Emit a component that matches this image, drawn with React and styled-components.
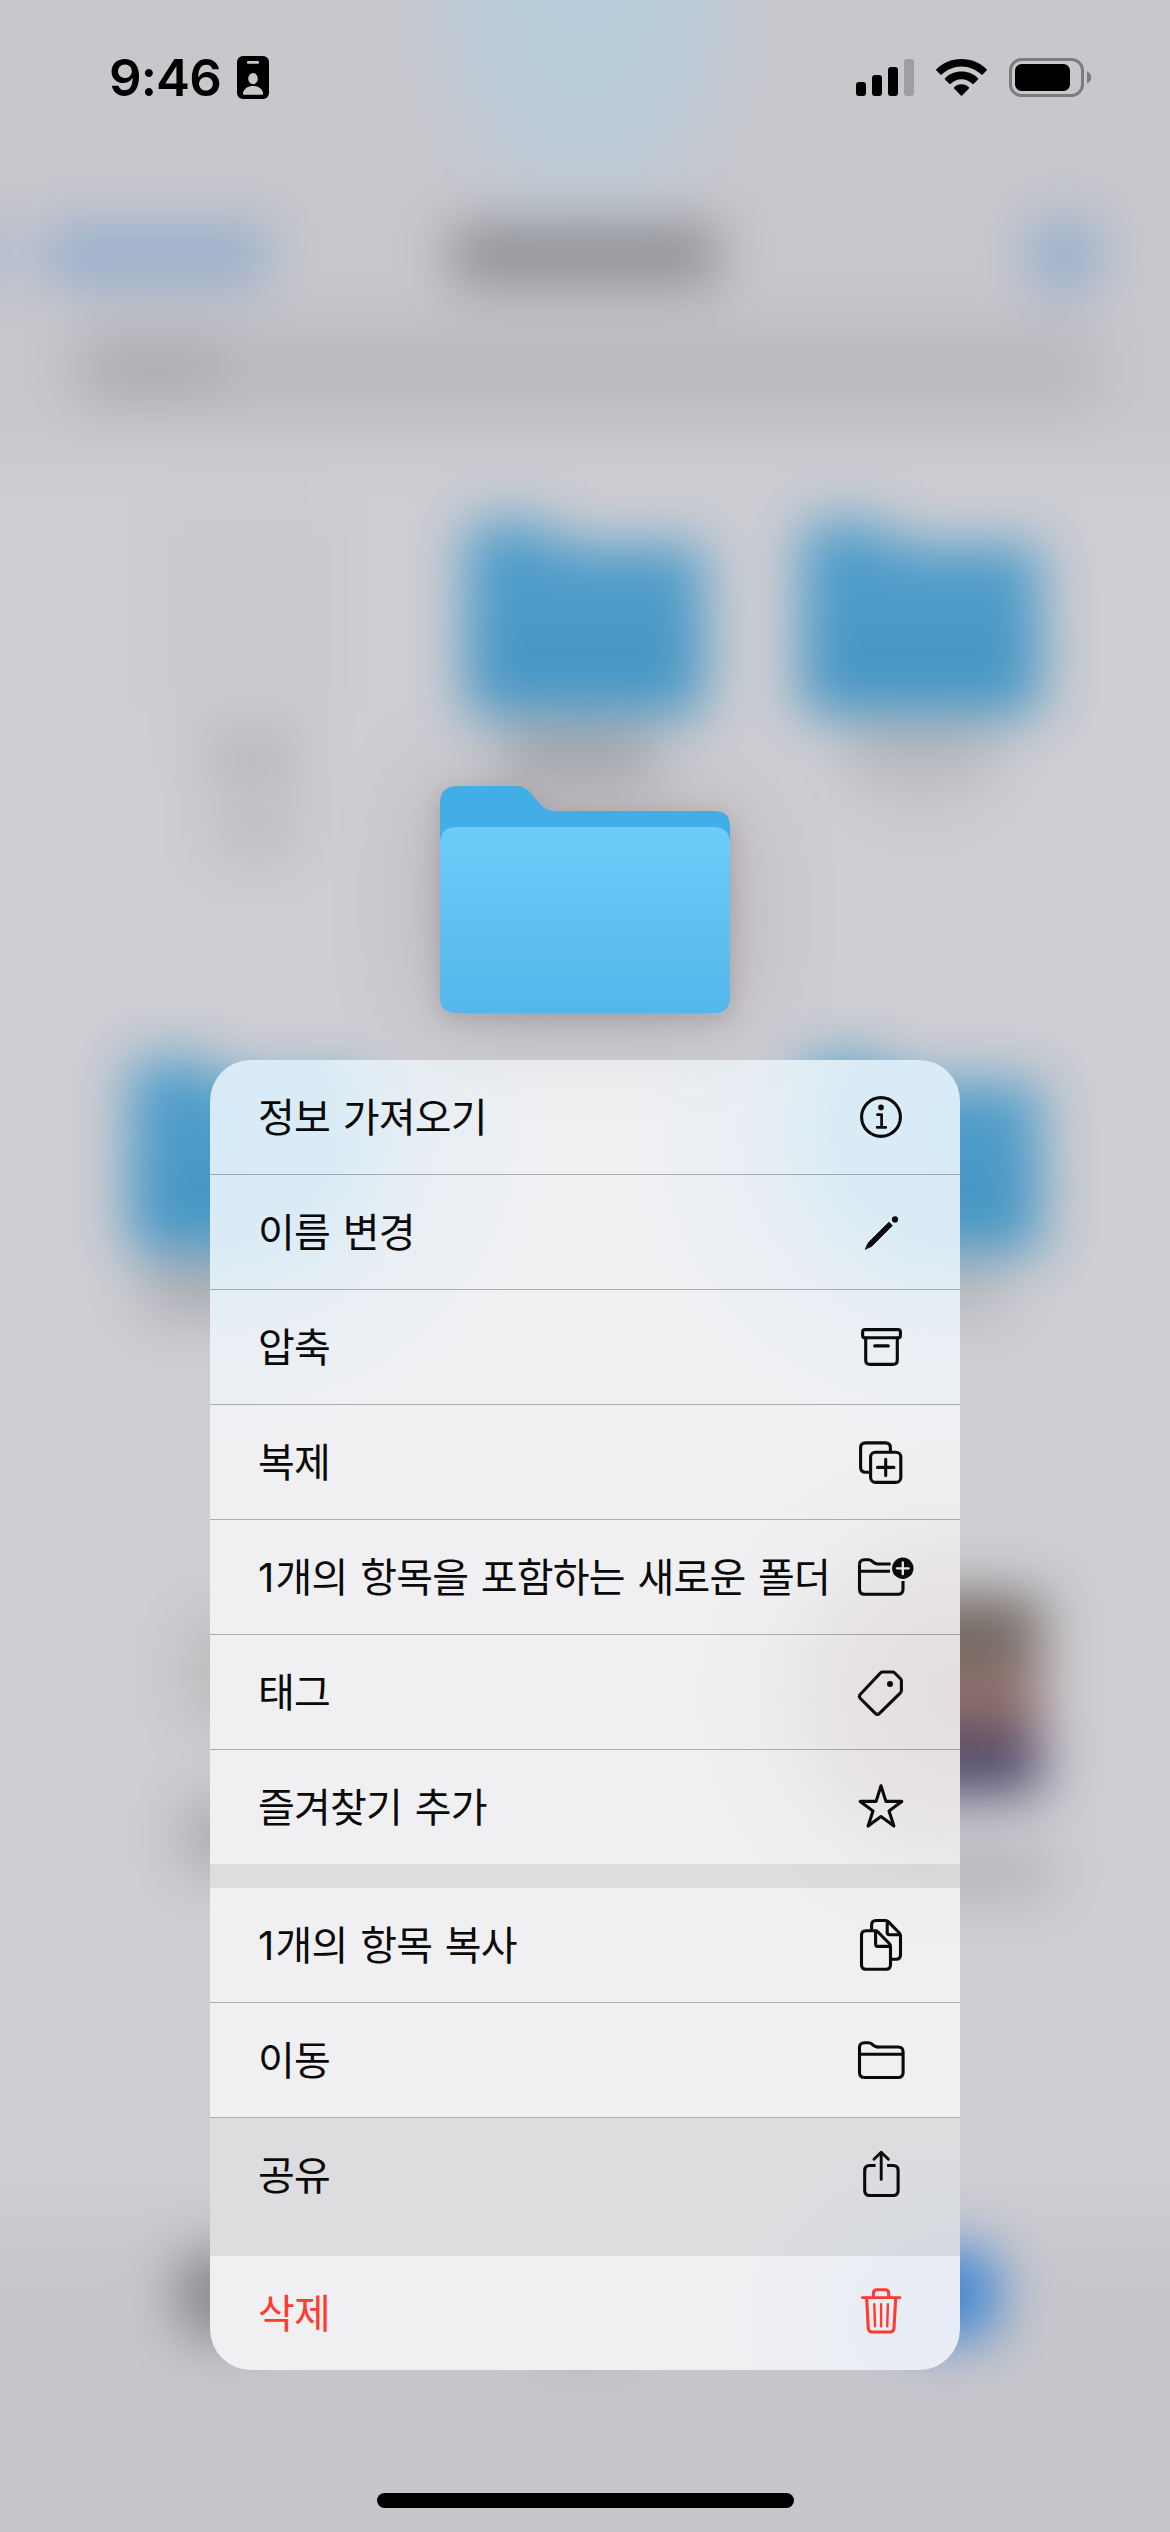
import React from "react";
import styled, { createGlobalStyle } from "styled-components";

const GlobalStyle = createGlobalStyle`
  * { box-sizing: border-box; }
  html, body { margin: 0; padding: 0; background: #c9c8cd; }
`;

const Screen = styled.div`
  position: relative;
  width: 1170px;
  height: 2532px;
  overflow: hidden;
  background: #cdccd1;
  font-family: Inter, "Noto Sans CJK KR", sans-serif;
`;

/* ---------- blurred file browser behind the menu ---------- */

const Backdrop = styled.div`
  position: absolute;
  inset: -80px;
  padding: 80px;
  display: flex;
  flex-direction: column;
  background: linear-gradient(#c8c7cc 0 510px, #cecdd2 560px 2270px, #c7c6cb 2350px);
  filter: blur(27px);
`;

const IslandGlow = styled.div`
  width: 420px;
  height: 370px;
  margin: -80px auto -80px;
  flex: none;
  background: radial-gradient(ellipse 50% 80% at 50% 20%, #b7cfdd 0%, #bacdda 35%, #bfcbd6 62%, rgba(198, 200, 207, 0.5) 85%, rgba(200, 199, 204, 0) 100%);
`;

const NavRow = styled.div`
  flex: none;
  height: 90px;
  display: grid;
  grid-template-columns: 1fr 270px 1fr;
  align-items: center;
  margin: 0 -60px;
`;

const Smudge = styled.div`
  width: ${(p) => p.$w}px;
  height: ${(p) => p.$h}px;
  margin: ${(p) => p.$m || 0};
  border-radius: ${(p) => p.$r || 10}px;
  background: ${(p) => p.$c};
`;

const BackLink = styled.div`
  display: flex;
  gap: 34px;
`;

const SearchField = styled.div`
  flex: none;
  width: 1036px;
  height: 100px;
  margin: 19px auto 0;
  padding: 22px 24px;
  border-radius: 30px;
  background: #bbbabf;
`;

const Grid = styled.div`
  flex: none;
  display: grid;
  grid-template-columns: repeat(3, 336px);
  grid-template-rows: 538px 538px 620px;
  justify-content: center;
  margin-top: 102px;
  height: 1728px;
`;

const Cell = styled.div`
  display: flex;
  flex-direction: column;
  align-items: center;
`;

const FolderShape = styled.div`
  width: 240px;
  height: 194px;
  background: linear-gradient(#529fcc, #4394c3);
  border-radius: 12px;
  clip-path: polygon(0 0, 32% 0, 42% 12%, 100% 12%, 100% 100%, 0 100%);
`;

const Photo = styled.div`
  width: 240px;
  height: 196px;
  background: linear-gradient(#5f5c57 0%, #7d6e68 30%, #98736e 52%, #806067 66%, #40406a 84%, #40435e 100%);
`;

const Toolbar = styled.div`
  flex: none;
  display: flex;
  justify-content: space-between;
  align-items: center;
  height: 90px;
  padding: 0 172px 0 178px;
`;

/* ---------- foreground ---------- */

const Foreground = styled.div`
  position: relative;
  height: 100%;
  display: flex;
  flex-direction: column;
  align-items: center;
`;

const StatusBar = styled.div`
  width: 100%;
  height: 155px;
  display: flex;
  align-items: center;
  padding: 0 78px 0 109px;
`;

const Clock = styled.span`
  font-family: Inter, sans-serif;
  font-size: 51px;
  font-weight: 560;
  line-height: 60px;
  letter-spacing: -0.9px;
  width: 128px;
  white-space: nowrap;
  color: #000;
`;

const StatusIcons = styled.div`
  margin-left: auto;
  display: flex;
  align-items: center;
`;

const WifiSlot = styled.div`
  display: flex;
  margin: 0 22px;
`;

const Preview = styled.div`
  margin-top: 631px;
  width: 290px;
  height: 227px;
  filter: drop-shadow(0 6px 12px rgba(60, 50, 50, 0.22)) drop-shadow(0 0 50px rgba(80, 70, 75, 0.24));
  svg { display: block; }
`;

const Menu = styled.div`
  margin-top: 47px;
  width: 750px;
  border-radius: 41px;
  overflow: hidden;
  background:
    radial-gradient(ellipse 350px 320px at 0px 70px, #d6ebf8 0%, rgba(216, 235, 246, 0.9) 35%, rgba(226, 238, 246, 0.5) 65%, rgba(239, 240, 242, 0) 100%),
    radial-gradient(ellipse 340px 320px at 750px 70px, #d6ebf8 0%, rgba(216, 235, 246, 0.9) 35%, rgba(226, 238, 246, 0.5) 65%, rgba(239, 240, 242, 0) 100%),
    radial-gradient(ellipse 280px 270px at 750px 635px, #e3ddde 0%, rgba(227, 222, 223, 0.75) 40%, rgba(235, 233, 235, 0.3) 75%, rgba(239, 239, 241, 0) 100%),
    radial-gradient(ellipse 240px 200px at 750px 1260px, #e6ecf6 0%, rgba(232, 237, 245, 0.6) 50%, rgba(239, 239, 241, 0) 100%),
    #f0f0f2;
`;

const Group = styled.div`
  border-bottom: ${(p) => (p.$gap ? "24px solid rgba(0, 0, 0, 0.08)" : "none")};
`;

const Row = styled.div`
  height: ${(p) => (p.$last ? 114 : 115)}px;
  padding: 0 49px 0 48px;
  display: flex;
  align-items: center;
  justify-content: space-between;
  border-bottom: ${(p) => (p.$last ? "none" : "1px solid rgba(58, 62, 68, 0.38)")};
  background: ${(p) => (p.$pressed ? "rgba(0, 0, 0, 0.08)" : "transparent")};
  color: ${(p) => (p.$danger ? "#ff3b30" : "#0a0a0a")};
`;

const Label = styled.span`
  padding-top: 2px;
  font-size: 40px;
  line-height: 60px;
  letter-spacing: -0.8px;
  word-spacing: 2.2px;
  white-space: nowrap;
`;

const Count = styled.span`
  letter-spacing: 1.2px;
`;

const Glyph = styled.svg`
  display: block;
  flex: none;
  width: 60px;
  height: 60px;
  overflow: visible;
  fill: none;
  stroke: currentColor;
  stroke-width: 3.1;
  stroke-linecap: round;
  stroke-linejoin: round;
`;

const HomeIndicator = styled.div`
  margin-top: auto;
  margin-bottom: 24px;
  width: 417px;
  height: 15px;
  border-radius: 8px;
  background: #000;
`;

const folderTab =
  "M8.5 17.8 q0-5 5-5 H17.5 c1.6 0 2.6 .5 3.6 1.4 l1.2 1 c1.4 1.2 2.4 1.8 4.4 1.8";

const glyphs = {
  info: (
    <>
      <circle cx="30" cy="30" r="19.4" />
      <circle cx="30" cy="20.4" r="2.8" fill="currentColor" stroke="none" />
      <path d="M26.4 27.6 H30.6 V40.2 M26.2 40.4 H34.8" strokeWidth="2.7" />
    </>
  ),
  pencil: (
    <>
      <path d="M14.4 47 L17.2 40.8 L37.9 20.2 L41.4 23.6 L20.8 44.2 Z" fill="currentColor" strokeWidth=".8" />
      <circle cx="44" cy="17.4" r="3.1" fill="currentColor" stroke="none" />
    </>
  ),
  archive: (
    <>
      <rect x="11.6" y="12.6" width="37.8" height="8.2" rx="2.4" />
      <path d="M14.7 21 V43 q0 4.4 4.4 4.4 H41.9 q4.4 0 4.4-4.4 V21 M23.7 28.9 H37.3" />
    </>
  ),
  duplicate: (
    <>
      <path d="M18 40.3 H14.6 q-5 0-5-5 V15.9 q0-5 5-5 H34.4 q5 0 5 5 V19" strokeLinecap="butt" />
      <rect x="19.6" y="20.2" width="30.2" height="30.2" rx="5" />
      <path d="M34.7 27.2 V43.6 M26.5 35.4 H42.9" />
    </>
  ),
  newFolder: (
    <>
      <path d={`${folderTab} H39.6`} strokeLinecap="butt" />
      <path d="M8.5 17.8 V42.3 q0 5 5 5 H47 q5 0 5-5 V34 M8.5 24.3 H39" strokeLinecap="butt" />
      <circle cx="51.8" cy="21.3" r="10.7" fill="currentColor" stroke="none" />
      <path d="M51.8 15.4 V27.2 M45.9 21.3 H57.7" stroke="#ececed" strokeWidth="2.3" />
    </>
  ),
  tag: (
    <>
      <path d="M31.7 10 H41.4 q1.4 0 2.4 1 L49.4 16.6 q1 1 1 2.4 V28.2 q0 1.6-1 2.6 L28.5 51.4 q-2.1 2-4.2 0 L9.4 36.5 q-2-2.1 0-4.2 L29.4 11 q1-1 2.3-1 Z" />
      <circle cx="39" cy="22" r="3" fill="currentColor" stroke="none" />
    </>
  ),
  star: (
    <path d="M30 8.8 L34.9 24.4 H50.8 L38 33.9 L42.9 49 L30 39.6 L17.1 49 L22 33.9 L9.2 24.4 H25.1 Z" />
  ),
  copy: (
    <>
      <path d="M25.6 15.8 H15 q-4.5 0-4.5 4.5 V49.7 q0 4.5 4.5 4.5 H35 q4.5 0 4.5-4.5 V31.5 q0-1.8-1.2-3 L27 17 q-.8-1.2-2.6-1.2 M24.6 16 V29.2 q0 2.2 2.2 2.2 H39.2" />
      <path d="M20.6 14.8 V10 q0-4.5 4.5-4.5 H34.6 q1.6 0 2.6 1.1 L48.4 18 q1.1 1.1 1.1 2.7 V39.7 q0 4.5-4.5 4.5 H41 M36.2 6 V17.6 q0 2.2 2.2 2.2 H49" strokeLinecap="butt" />
    </>
  ),
  folder: (
    <>
      <path d={folderTab} />
      <path d="M8.5 17.8 V42.5 q0 5 5 5 H47.1 q5 0 5-5 V22 q0-5-5-5 H26.7 M8.5 24.2 H52" />
    </>
  ),
  share: (
    <>
      <path d="M24.6 20.5 H18.7 q-5 0-5 5 V45.5 q0 5 5 5 H42.1 q5 0 5-5 V25.5 q0-5-5-5 H36" strokeLinecap="butt" />
      <path d="M30.2 8 V34.4 M23 14.2 L30.2 7.2 L37.4 14.2" strokeWidth="2.9" />
    </>
  ),
  trash: (
    <>
      <path d="M11.3 14.6 H49" strokeWidth="2.9" />
      <path d="M22.4 14 V10.4 q0-3.7 3.7-3.7 H34 q3.7 0 3.7 3.7 V14 M15.7 15 L17.2 45 q.2 4 4 4 H39 q3.8 0 4-4 L44.7 15" />
      <path d="M23.3 21.3 L24 43.4 M30.1 21.3 V43.4 M36.9 21.3 L36.2 43.4" strokeWidth="2.4" />
    </>
  ),
};

const groups = [
  [
    { label: "정보 가져오기", icon: "info" },
    { label: "이름 변경", icon: "pencil" },
    { label: "압축", icon: "archive" },
    { label: "복제", icon: "duplicate" },
    { count: 1, label: "개의 항목을 포함하는 새로운 폴더", icon: "newFolder" },
    { label: "태그", icon: "tag" },
    { label: "즐겨찾기 추가", icon: "star" },
  ],
  [
    { count: 1, label: "개의 항목 복사", icon: "copy" },
    { label: "이동", icon: "folder" },
    { label: "공유", icon: "share", pressed: true },
  ],
  [{ label: "삭제", icon: "trash", danger: true }],
];

function BlurredBrowser() {
  return (
    <Backdrop>
      <IslandGlow />
      <NavRow>
        <BackLink>
          <Smudge $w={70} $h={60} $c="#aab7ce" />
          <Smudge $w={226} $h={62} $c="#98aecd" />
        </BackLink>
        <Smudge $w={270} $h={60} $c="#8d8e93" />
        <Smudge $w={72} $h={78} $r={34} $c="#92adcd" $m="0 130px 0 auto" />
      </NavRow>
      <SearchField>
        <Smudge $w={130} $h={52} $c="#adadb0" />
      </SearchField>
      <Grid>
        <Cell>
          <Smudge $w={180} $h={200} $c="#cac9ce" $m="-10px 0 0" />
          <Smudge $w={100} $h={40} $c="#b3b3b7" $m="22px 0 0 6px" />
          <Smudge $w={90} $h={76} $c="#c0bfc4" $m="14px 0 0 14px" />
        </Cell>
        <Cell>
          <FolderShape />
          <Smudge $w={150} $h={44} $c="#9fa0a5" $m="18px 0 0 -10px" />
        </Cell>
        <Cell>
          <FolderShape />
          <Smudge $w={150} $h={40} $c="#b0b0b4" $m="18px 0 0" />
          <Smudge $w={110} $h={30} $c="#c5c4c9" $m="12px 0 0" />
        </Cell>
        <Cell>
          <FolderShape />
          <Smudge $w={210} $h={44} $c="#a6a6aa" $m="16px 0 0" />
        </Cell>
        <Cell />
        <Cell>
          <FolderShape />
          <Smudge $w={170} $h={44} $c="#b4b4b8" $m="16px 0 0" />
        </Cell>
        <Cell>
          <Smudge $w={130} $h={110} $c="#bdbdbf" $m="20px 0 0" />
          <Smudge $w={130} $h={70} $c="#aaaaae" $m="74px 0 0" />
        </Cell>
        <Cell />
        <Cell>
          <Photo />
          <Smudge $w={260} $h={46} $c="#b2b2b6" $m="56px 0 0" />
        </Cell>
      </Grid>
      <Toolbar>
        <Smudge $w={90} $h={84} $c="#858589" $r={20} />
        <Smudge $w={90} $h={40} $c="#b5b5b9" $m="96px 0 0" />
        <Smudge $w={100} $h={92} $c="#3f85d2" $r={24} />
      </Toolbar>
    </Backdrop>
  );
}

function IdBadge() {
  return (
    <svg width="32" height="43" viewBox="0 0 32 43">
      <rect width="32" height="43" rx="6" fill="#000" />
      <rect x="10" y="5" width="12" height="2.8" rx="1" fill="#c8c7cc" />
      <ellipse cx="16" cy="22.6" rx="4.8" ry="5.6" fill="#c8c7cc" />
      <path d="M6 38 V36.8 C7 32.4 11 30 16 30 S25 32.4 26 36.8 V38 q0 .8-.8 .8 H6.8 q-.8 0-.8-.8 Z" fill="#c8c7cc" />
    </svg>
  );
}

function Signal() {
  return (
    <svg width="58" height="37" viewBox="0 0 58 37">
      <rect x="0" y="23" width="10" height="14" rx="3" />
      <rect x="16" y="16" width="10" height="21" rx="3" />
      <rect x="32" y="8" width="10" height="29" rx="3" />
      <rect x="48" y="0" width="10" height="37" rx="3" fill="#9f9ea3" />
    </svg>
  );
}

function Wifi() {
  return (
    <svg width="51" height="37" viewBox="0 0 51 37">
      <path d="M25.5 0 C35.5 0 44.5 4 50.6 10.3 Q51.2 11 50.6 11.6 L46.6 15.6 Q46 16.1 45.3 15.5 C40 10.5 33 7.5 25.5 7.5 S11 10.5 5.7 15.5 Q5 16.1 4.4 15.6 L.4 11.6 Q-.2 11 .4 10.3 C6.5 4 15.5 0 25.5 0 Z" />
      <path d="M25.5 12.6 C32 12.6 37.8 15.1 42 19.2 Q42.6 19.8 42 20.4 L37.7 24.7 Q37 25.2 36.4 24.7 C33.4 22 29.7 20.2 25.5 20.2 S17.6 22 14.6 24.7 Q14 25.2 13.3 24.7 L9 20.4 Q8.4 19.8 9 19.2 C13.2 15.1 19 12.6 25.5 12.6 Z" />
      <path d="M25.5 25.3 C28.4 25.3 31 26.4 32.9 28.2 Q33.5 28.9 32.9 29.5 L26.1 36.4 Q25.5 37 24.9 36.4 L18.1 29.5 Q17.5 28.9 18.1 28.2 C20 26.4 22.6 25.3 25.5 25.3 Z" />
    </svg>
  );
}

function Battery() {
  return (
    <svg width="83" height="39" viewBox="0 0 83 39">
      <rect x="1.5" y="1.5" width="72" height="36" rx="11" fill="none" stroke="#7c7b7f" strokeWidth="3" />
      <rect x="6" y="6" width="55" height="27" rx="6.5" />
      <path d="M78 13.3 C80.6 14.6 82.3 16.8 82.3 19.5 S80.6 24.4 78 25.7 Z" fill="#7c7b7f" />
    </svg>
  );
}

function FolderArt() {
  return (
    <svg width="290" height="227" viewBox="0 0 290 227">
      <defs>
        <linearGradient id="front" x1="0" y1="0" x2="0" y2="1">
          <stop offset="0" stopColor="#6dccf9" />
          <stop offset="1" stopColor="#54b6ea" />
        </linearGradient>
      </defs>
      <path d="M0 17 Q0 0 18 0 H77 C85 0 89 5 94 11 L101 19 Q106 25 115 25 H274 Q290 25 290 40 V120 H0 Z" fill="#42aee8" />
      <path d="M0 56 Q1 41 17 41 H273 Q289 41 290 56 V211 Q290 227 274 227 H16 Q0 227 0 211 Z" fill="url(#front)" />
    </svg>
  );
}

export default function App() {
  return (
    <Screen>
      <GlobalStyle />
      <BlurredBrowser />
      <Foreground>
        <StatusBar>
          <Clock>9:46</Clock>
          <IdBadge />
          <StatusIcons>
            <Signal />
            <WifiSlot><Wifi /></WifiSlot>
            <Battery />
          </StatusIcons>
        </StatusBar>
        <Preview><FolderArt /></Preview>
        <Menu>
          {groups.map((rows, g) => (
            <Group key={g} $gap={g < groups.length - 1}>
              {rows.map((row, i) => (
                <Row key={row.icon} $last={i === rows.length - 1} $pressed={row.pressed} $danger={row.danger}>
                  <Label>
                    {row.count && <Count>{row.count}</Count>}
                    {row.label}
                  </Label>
                  <Glyph viewBox="0 0 60 60">{glyphs[row.icon]}</Glyph>
                </Row>
              ))}
            </Group>
          ))}
        </Menu>
        <HomeIndicator />
      </Foreground>
    </Screen>
  );
}
